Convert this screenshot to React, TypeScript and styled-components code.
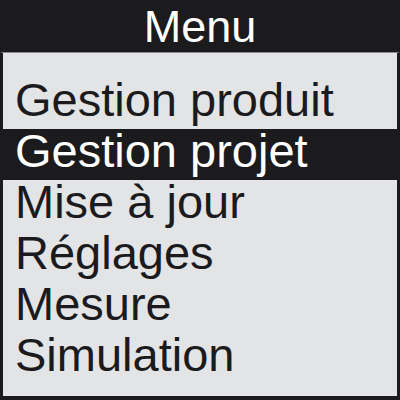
import styled, { createGlobalStyle } from 'styled-components';

const GlobalStyle = createGlobalStyle`
  html, body {
    margin: 0;
    padding: 0;
    background: #1b1a1d;
  }
  * {
    box-sizing: border-box;
  }
`;

const Screen = styled.div`
  width: 400px;
  height: 400px;
  display: flex;
  flex-direction: column;
  font-family: "Liberation Sans", Arial, sans-serif;
  background: #1b1a1d;
  overflow: hidden;
`;

const Header = styled.header`
  height: 52px;
  line-height: 54px;
  text-align: center;
  color: #ffffff;
  font-size: 45px;
  background: #1b1a1d;
`;

const Body = styled.ul`
  flex: 1;
  margin: 0;
  padding: 25px 0 0 0;
  list-style: none;
  background: #e3e4e5;
  border: 3px solid #1b1a1d;
  border-top: 1px solid #8c8c8e;
  border-bottom-width: 4px;
`;

const Item = styled.li<{ $active?: boolean }>`
  height: 51px;
  font-size: 47px;
  line-height: 43px;
  padding: 0 0 8px 12px;
  white-space: nowrap;
  color: ${(p) => (p.$active ? '#ffffff' : '#1b1a1d')};
  background: ${(p) => (p.$active ? '#1b1a1d' : 'transparent')};
  margin: ${(p) => (p.$active ? '0 -3px' : '0')};
  padding-left: ${(p) => (p.$active ? '15px' : '12px')};
`;

const items = [
  'Gestion produit',
  'Gestion projet',
  'Mise à jour',
  'Réglages',
  'Mesure',
  'Simulation',
];

export default function App() {
  const selected = 1;
  return (
    <>
      <GlobalStyle />
      <Screen>
        <Header>Menu</Header>
        <Body>
          {items.map((label, i) => (
            <Item key={label} $active={i === selected}>
              {label}
            </Item>
          ))}
        </Body>
      </Screen>
    </>
  );
}
